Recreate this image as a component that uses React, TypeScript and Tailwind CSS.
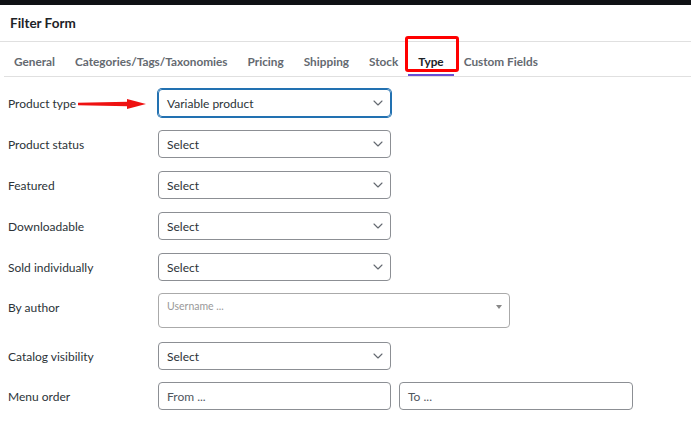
const tabs = ["General", "Categories/Tags/Taxonomies", "Pricing", "Shipping", "Stock", "Type", "Custom Fields"];

function Label({ text }: { text: string }) {
  return <div className="w-[150px] h-[28px] flex items-center pt-[2px] text-[12px] text-[#2c3338]">{text}</div>;
}

function Chevron() {
  return (
    <svg width="10" height="6" viewBox="0 0 10 6" className="mr-[1px]">
      <polyline points="1,1 5,5 9,1" fill="none" stroke="#646970" strokeWidth="1.1" strokeLinecap="round" strokeLinejoin="round" />
    </svg>
  );
}

function SelectBox({ value, active }: { value: string; active?: boolean }) {
  return (
    <div
      className={`w-[233px] h-[28px] rounded-[4px] flex items-center justify-between pl-[8px] pr-[6px] text-[12px] text-[#2c3338] ${
        active ? "border border-[#2271b1] shadow-[0_0_0_1px_#2271b1]" : "border border-[#8c8f94]"
      }`}
    >
      <span className="pt-[1px]">{value}</span>
      <Chevron />
    </div>
  );
}

export default function App() {
  return (
    <div className="w-[691px] h-[444px] bg-white overflow-hidden" style={{ fontFamily: 'Lato, "Noto Sans", sans-serif' }}>
      <div className="h-[5px] bg-[#0f1114]" />

      {/* Title */}
      <div className="h-[37px] flex items-center px-[10px] pt-[1px] border-b border-[#e0e0e0] text-[13.5px] font-bold text-[#1d2327]">
        Filter Form
      </div>

      {/* Tabs */}
      <div className="ml-[4px] h-[35px] flex items-stretch border-b border-[#e0e0e0]">
        {tabs.map((t) => (
          <div key={t} className="relative px-[10px] flex items-center pt-[5px]">
            <span className={`text-[11.8px] font-bold ${t === "Type" ? "text-[#1d2327]" : "text-[#646970]"}`}>{t}</span>
            {t === "Type" && (
              <>
                <div className="absolute left-0 right-0 bottom-[0px] h-[2px] bg-[#6a4fd6]" />
                <div className="absolute left-[-3px] right-[-5px] top-[-6px] bottom-[4px] border-[3px] border-[#ff0000] rounded-[3px]" />
              </>
            )}
          </div>
        ))}
      </div>

      {/* Form */}
      <div className="pl-[8px] pt-[12px] flex flex-col">
        <div className="flex items-start relative">
          <Label text="Product type" />
          <SelectBox value="Variable product" active />
          <svg className="absolute left-[70px] top-[9px]" width="70" height="12" viewBox="0 0 70 12">
            <path d="M0 6 L50 5 L50 7 Z" fill="#ee1111" stroke="#ee1111" strokeWidth="2.5" strokeLinejoin="round" />
            <path d="M49 1 L68 6 L49 11 Z" fill="#ee1111" />
          </svg>
        </div>
        <div className="flex items-start mt-[13px]">
          <Label text="Product status" />
          <SelectBox value="Select" />
        </div>
        <div className="flex items-start mt-[13px]">
          <Label text="Featured" />
          <SelectBox value="Select" />
        </div>
        <div className="flex items-start mt-[13px]">
          <Label text="Downloadable" />
          <SelectBox value="Select" />
        </div>
        <div className="flex items-start mt-[13px]">
          <Label text="Sold individually" />
          <SelectBox value="Select" />
        </div>
        <div className="flex items-start mt-[12px]">
          <Label text="By author" />
          <div className="w-[352px] h-[35px] rounded-[4px] border border-[#aaaaaa] flex items-start justify-between pl-[8px] pr-[7px] pt-[5px]">
            <span className="text-[10.5px] text-[#999999]">Username ...</span>
            <span className="mt-[6px] w-0 h-0 border-l-[3px] border-r-[3px] border-t-[4px] border-l-transparent border-r-transparent border-t-[#888888]" />
          </div>
        </div>
        <div className="flex items-start mt-[14px]">
          <Label text="Catalog visibility" />
          <SelectBox value="Select" />
        </div>
        <div className="flex items-start mt-[12px]">
          <Label text="Menu order" />
          <div className="w-[233px] h-[28px] rounded-[4px] border border-[#8c8f94] flex items-center pl-[8px] pt-[1px] text-[12px] text-[#50575e]">
            From ...
          </div>
          <div className="ml-[8px] w-[234px] h-[28px] rounded-[4px] border border-[#8c8f94] flex items-center pl-[8px] pt-[1px] text-[12px] text-[#50575e]">
            To ...
          </div>
        </div>
      </div>
    </div>
  );
}
